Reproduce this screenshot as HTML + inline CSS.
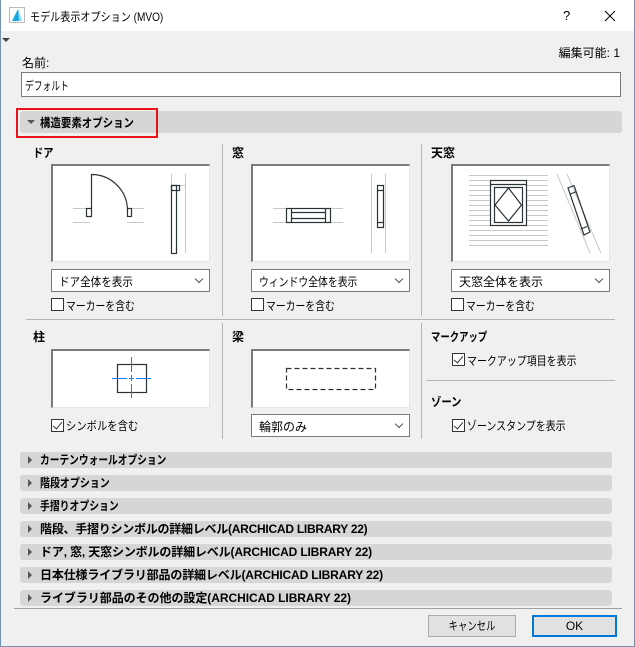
<!DOCTYPE html>
<html><head><meta charset="utf-8"><style>
*{margin:0;padding:0;box-sizing:border-box}
body{width:635px;height:647px;background:#f0f0f0;font-family:"Liberation Sans","Noto Sans CJK JP",sans-serif;font-size:12px;color:#000;position:relative;overflow:hidden}
.a{position:absolute;white-space:nowrap}
.s{display:inline-block;transform-origin:0 50%;white-space:nowrap}
.b{font-weight:bold}
.box{position:absolute;background:#fff;border-top:2px solid #7a7a7a;border-left:2px solid #7a7a7a;border-right:1px solid #e3e3e3;border-bottom:1px solid #e3e3e3}
.dd{position:absolute;background:#fff;border:1px solid #7a7a7a;height:23px;padding:3px 0 0 7px;white-space:nowrap}
.dd:after{content:"";position:absolute;right:7px;top:6px;width:5px;height:5px;border-right:1px solid #555;border-bottom:1px solid #555;transform:rotate(45deg)}
.cb{position:absolute;width:13px;height:13px;border:1px solid #333;background:#fff}
.ck:after{content:"";position:absolute;left:3px;top:0px;width:4px;height:8px;border-right:1.3px solid #333;border-bottom:1.3px solid #333;transform:rotate(40deg)}
.bar{position:absolute;left:20px;width:592px;height:16px;background:#d6d6d6;border-radius:3px;padding:0 0 0 20px;line-height:16px;font-weight:bold;white-space:nowrap}
.bar:before{content:"";position:absolute;left:8px;top:4px;border-left:4px solid #555;border-top:4px solid transparent;border-bottom:4px solid transparent}
.vl{position:absolute;width:1px;background:#b4b4b4}
.hl{position:absolute;height:1px;background:#b4b4b4}
.btn{position:absolute;height:22px;background:#e1e1e1;border:1px solid #adadad;text-align:center;line-height:20px}
</style></head><body>
<div class="a" style="left:0;top:0;width:635px;height:31px;background:#fff"></div>
<div class="a" style="left:0;top:0;width:1px;height:647px;background:#7390b3"></div>
<div class="a" style="left:634px;top:0;width:1px;height:647px;background:#7390b3"></div>
<div class="a" style="left:0;top:646px;width:635px;height:1px;background:#7390b3"></div>
<svg class="a" style="left:9px;top:7px" width="16" height="16"><rect x="0.5" y="0.5" width="15" height="15" fill="#fff" stroke="#bbb"/><path d="M3 14 L9 2 L13 14 Z" fill="#18a8e0"/><path d="M9 2 L13 14 L10 14 Z" fill="#8fdcf5"/></svg>
<div class="a" style="left:30px;top:8px"><span class="s" style="transform:scaleX(0.84)">モデル表示オプション (MVO)</span></div>
<div class="a" style="left:563px;top:8px;font-size:13px">?</div>
<svg class="a" style="left:604px;top:10px" width="12" height="12"><path d="M1 1L11 11M11 1L1 11" stroke="#000" stroke-width="1"/></svg>
<div class="a" style="left:2px;top:38px;border-top:4px solid #444;border-left:4px solid transparent;border-right:4px solid transparent"></div>
<div class="a" style="left:22px;top:54px">名前:</div>
<div class="a" style="right:15px;top:44px">編集可能: 1</div>
<div class="a" style="left:21px;top:72px;width:600px;height:25px;background:#fff;border:1px solid #7a7a7a;padding:4px 0 0 3px"><span class="s" style="transform:scaleX(0.73)">デフォルト</span></div>
<div class="a" style="left:20px;top:111px;width:602px;height:22px;background:#d6d6d6;border-radius:3px"></div>
<div class="a" style="left:16px;top:108px;width:142px;height:30px;border:2px solid #e8141a"></div>
<div class="a" style="left:27px;top:120px;border-top:4px solid #555;border-left:4px solid transparent;border-right:4px solid transparent"></div>
<div class="a b" style="left:40px;top:114px"><span class="s" style="transform:scaleX(0.87)">構造要素オプション</span></div>

<div class="vl" style="left:222px;top:144px;height:172px"></div>
<div class="vl" style="left:421px;top:144px;height:172px"></div>
<div class="hl" style="left:26px;top:319px;width:589px"></div>
<div class="vl" style="left:222px;top:323px;height:116px"></div>
<div class="vl" style="left:421px;top:323px;height:116px"></div>
<div class="hl" style="left:426px;top:380px;width:189px"></div>

<div class="a b" style="left:33px;top:144px"><span class="s" style="transform:scaleX(0.85)">ドア</span></div>
<div class="a b" style="left:232px;top:144px">窓</div>
<div class="a b" style="left:431px;top:144px">天窓</div>

<div class="box" style="left:51px;top:164px;width:159px;height:98px"></div>
<svg class="a" style="left:51px;top:164px" width="159" height="98" viewBox="51 164 159 98" fill="none">
<g stroke="#c8c8c8"><path d="M73 208.5H86M73 222.5H90M131 208.5H144M127 222.5H144M171.5 174V253M185.5 174V253M171 185.5H185"/></g>
<g stroke="#2a3338" stroke-width="1.2"><path d="M91.5 208V174.5A36 36 0 0 1 127.5 210.5"/><rect x="86.5" y="208.5" width="5" height="8"/><rect x="127.5" y="208.5" width="4" height="8"/><rect x="171.5" y="185.5" width="5" height="68"/><rect x="171.5" y="185.5" width="8" height="5"/></g></svg>
<div class="box" style="left:251px;top:164px;width:159px;height:98px"></div>
<svg class="a" style="left:251px;top:164px" width="159" height="98" viewBox="251 164 159 98" fill="none">
<g stroke="#c8c8c8"><path d="M273 208.5H343M273 222.5H343M371.5 174V253M385.5 174V253"/></g>
<g stroke="#2a3338" stroke-width="1.2"><rect x="286.5" y="208.5" width="44" height="14"/><path d="M291.5 208V222M325.5 208V222M291 212.5H325M291 218.5H325"/><rect x="377.5" y="185.5" width="6" height="42"/><path d="M377 190.5H383M377 222.5H383"/></g></svg>
<div class="box" style="left:451px;top:164px;width:159px;height:98px"></div>
<svg class="a" style="left:451px;top:164px" width="159" height="98" viewBox="451 164 159 98" fill="none">
<g stroke="#c8c8c8"><path d="M469 175.5H548M469 180.5H548M469 185.5H548M469 190.5H548M469 195.5H548M469 200.5H548M469 205.5H548M469 210.5H548M469 215.5H548M469 220.5H548M469 225.5H548M469 230.5H548M469 235.5H548M469 240.5H548M469 245.5H548M557 174L590 253M567 174L601 253"/></g>
<rect x="490.5" y="180.5" width="36" height="45" fill="#fff" stroke="#2a3338" stroke-width="1.2"/>
<g stroke="#2a3338" stroke-width="1.2"><path d="M490 184.5H526"/><rect x="494.5" y="187.5" width="28" height="35"/><path d="M508.5 188L521.5 205L508.5 221L495 205Z"/><path d="M568 188L574 185.5L590 232L584 235Z M570.5 194L576.5 191.5M581 229L587 226.5"/></g></svg>

<div class="dd" style="left:51px;top:269px;width:159px"><span class="s" style="transform:scaleX(0.88)">ドア全体を表示</span></div>
<div class="dd" style="left:251px;top:269px;width:159px"><span class="s" style="transform:scaleX(0.82)">ウィンドウ全体を表示</span></div>
<div class="dd" style="left:451px;top:269px;width:159px">天窓全体を表示</div>
<div class="cb" style="left:51px;top:298px"></div><div class="a" style="left:66px;top:297px"><span class="s" style="transform:scaleX(0.82)">マーカーを含む</span></div>
<div class="cb" style="left:251px;top:298px"></div><div class="a" style="left:266px;top:297px"><span class="s" style="transform:scaleX(0.82)">マーカーを含む</span></div>
<div class="cb" style="left:451px;top:298px"></div><div class="a" style="left:466px;top:297px"><span class="s" style="transform:scaleX(0.82)">マーカーを含む</span></div>

<div class="a b" style="left:33px;top:328px">柱</div>
<div class="a b" style="left:232px;top:328px">梁</div>
<div class="a b" style="left:431px;top:328px"><span class="s" style="transform:scaleX(0.78)">マークアップ</span></div>
<div class="box" style="left:51px;top:349px;width:159px;height:59px"></div>
<svg class="a" style="left:51px;top:349px" width="159" height="59" viewBox="51 349 159 59" fill="none">
<rect x="117.5" y="364.5" width="29" height="28" stroke="#2a3338" stroke-width="1.2"/>
<path d="M131.5 357V372M131.5 375V381M131.5 384V398M112 378.5H127M129 378.5H134M136 378.5H151" stroke="#1a7ef0"/></svg>
<div class="box" style="left:251px;top:349px;width:159px;height:59px"></div>
<svg class="a" style="left:251px;top:349px" width="159" height="59" viewBox="251 349 159 59" fill="none">
<rect x="286.5" y="368.5" width="89" height="21" stroke="#2a3338" stroke-width="1.2" stroke-dasharray="5 3"/></svg>
<div class="cb ck" style="left:51px;top:419px"></div><div class="a" style="left:66px;top:417px"><span class="s" style="transform:scaleX(0.86)">シンボルを含む</span></div>
<div class="dd" style="left:251px;top:414px;width:159px">輪郭のみ</div>
<div class="cb ck" style="left:452px;top:353px"></div><div class="a" style="left:467px;top:352px"><span class="s" style="transform:scaleX(0.83)">マークアップ項目を表示</span></div>
<div class="a b" style="left:431px;top:393px"><span class="s" style="transform:scaleX(0.86)">ゾーン</span></div>
<div class="cb ck" style="left:452px;top:419px"></div><div class="a" style="left:467px;top:417px"><span class="s" style="transform:scaleX(0.83)">ゾーンスタンプを表示</span></div>

<div class="bar" style="top:452px"><span class="s" style="transform:scaleX(0.81)">カーテンウォールオプション</span></div>
<div class="bar" style="top:475px"><span class="s" style="transform:scaleX(0.83)">階段オプション</span></div>
<div class="bar" style="top:498px"><span class="s" style="transform:scaleX(0.82)">手摺りオプション</span></div>
<div class="bar" style="top:521px;letter-spacing:-0.25px">階段、手摺りシンボルの詳細レベル(ARCHICAD LIBRARY 22)</div>
<div class="bar" style="top:544px;letter-spacing:-0.15px">ドア, 窓, 天窓シンボルの詳細レベル(ARCHICAD LIBRARY 22)</div>
<div class="bar" style="top:567px;letter-spacing:-0.15px">日本仕様ライブラリ部品の詳細レベル(ARCHICAD LIBRARY 22)</div>
<div class="bar" style="top:590px;letter-spacing:-0.05px">ライブラリ部品のその他の設定(ARCHICAD LIBRARY 22)</div>
<div class="a" style="left:14px;top:608px;width:608px;height:1px;background:#a0a0a0"></div>
<div class="btn" style="left:428px;top:615px;width:88px"><span class="s" style="transform:scaleX(0.78);transform-origin:50% 50%">キャンセル</span></div>
<div class="btn" style="left:532px;top:615px;width:85px;border:2px solid #0078d7;line-height:18px">OK</div>
</body></html>
